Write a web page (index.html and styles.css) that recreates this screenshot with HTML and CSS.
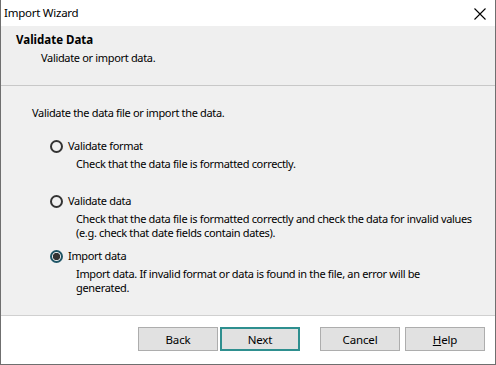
FILE: index.html
```html
<!DOCTYPE html>
<html>
<head>
<meta charset="utf-8">
<link rel="stylesheet" href="styles.css">
</head>
<body>
<div class="window">
  <div class="titlebar">
    <span class="title">Import Wizard</span>
    <svg class="close" width="12" height="12" viewBox="0 0 12 12"><path d="M0.5 0.5 L11.5 11.5 M11.5 0.5 L0.5 11.5" stroke="#000" stroke-width="1.1" fill="none"/></svg>
  </div>
  <div class="header">
    <div class="h-title">Validate Data</div>
    <div class="h-sub">Validate or import data.</div>
  </div>
  <div class="content">
    <div class="intro">Validate the data file or import the data.</div>
    <div class="options">
      <div class="option">
        <div class="opt-label"><span class="radio"></span>Validate format</div>
        <div class="opt-desc">Check that the data file is formatted correctly.</div>
      </div>
      <div class="option">
        <div class="opt-label"><span class="radio"></span>Validate data</div>
        <div class="opt-desc">Check that the data file is formatted correctly and check the data for invalid values<br>(e.g. check that date fields contain dates).</div>
      </div>
      <div class="option">
        <div class="opt-label"><span class="radio checked"></span>Import data</div>
        <div class="opt-desc">Import data. If invalid format or data is found in the file, an error will be<br>generated.</div>
      </div>
    </div>
  </div>
  <div class="footer">
    <button class="btn">Back</button>
    <button class="btn default">Next</button>
    <button class="btn cancel">Cancel</button>
    <button class="btn help"><u>H</u>elp</button>
  </div>
</div>
</body>
</html>
```

FILE: styles.css
```css
html, body {
  margin: 0;
  padding: 0;
  background: #ffffff;
}
body {
  font-family: "Noto Sans", "Open Sans", sans-serif;
  font-size: 11px;
  letter-spacing: -0.33px;
  line-height: 14px;
  color: #000;
}
.window {
  width: 496px;
  height: 365px;
  box-sizing: border-box;
  border-left: 1px solid #6f6f6f;
  border-right: 1px solid #6f6f6f;
  border-bottom: 1px solid #6f6f6f;
  display: flex;
  flex-direction: column;
  background: #fff;
  white-space: nowrap;
}
.titlebar {
  height: 26px;
  flex: none;
  display: flex;
  align-items: center;
  justify-content: space-between;
  padding-left: 3px;
  padding-right: 9px;
  background: #fff;
}
.title {
  font-size: 11.5px;
  letter-spacing: -0.25px;
}
.close {
  display: block;
  margin-top: 1px;
}
.header {
  height: 60px;
  flex: none;
  box-sizing: border-box;
  background: #efefef;
  border-bottom: 1px solid #c8c8c8;
  padding: 7px 0 0 15px;
}
.h-title {
  font-weight: bold;
  font-size: 11.5px;
  letter-spacing: 0;
}
.h-sub {
  margin-top: 4px;
  padding-left: 25px;
}
.content {
  height: 230px;
  flex: none;
  box-sizing: border-box;
  background: #f0f0f0;
  padding: 20px 0 0 31px;
  border-bottom: 1px solid #d0d0d0;
}
.options {
  margin-top: 19px;
  padding-left: 18px;
}
.option {
  height: 55px;
}
.opt-label {
  display: flex;
  align-items: center;
}
.radio {
  width: 13px;
  height: 13px;
  box-sizing: border-box;
  border: 2px solid #333;
  border-radius: 50%;
  margin-right: 5px;
  flex: none;
}
.radio.checked {
  border-color: #1f5566;
  background: radial-gradient(circle, #333 0 3.4px, #f0f0f0 3.9px);
}
.opt-desc {
  margin-top: 4px;
  padding-left: 26px;
}
.footer {
  flex: 1;
  background: #fff;
  display: flex;
  align-items: flex-start;
  padding: 11px 0 0 137px;
}
.btn {
  width: 80px;
  height: 24px;
  box-sizing: border-box;
  background: #e1e1e1;
  border: 1px solid #adadad;
  font-family: inherit;
  font-size: 11.5px;
  letter-spacing: -0.15px;
  color: #000;
  padding: 0;
  margin: 0;
}
.btn.default {
  border: 2px solid #2e8f8f;
  margin-left: 2px;
}
.btn.cancel {
  margin-left: 20px;
}
.btn.help {
  margin-left: 5px;
}
```
